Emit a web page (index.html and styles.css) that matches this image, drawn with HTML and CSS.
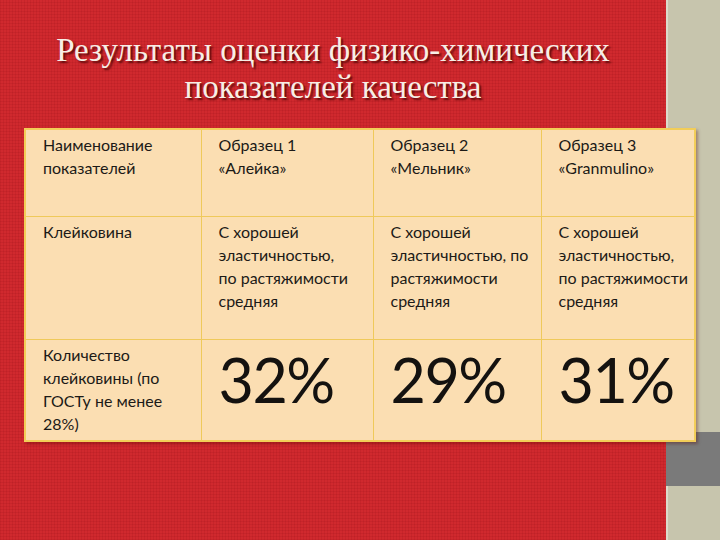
FILE: index.html
```html
<!DOCTYPE html>
<html lang="ru">
<head>
<meta charset="utf-8">
<title>Результаты оценки</title>
<link rel="stylesheet" href="styles.css">
</head>
<body>
<div class="page">
  <main class="slide">
    <h1 class="title">Результаты оценки физико-химических<br>показателей качества</h1>
    <table class="results">
      <colgroup>
        <col class="c1"><col class="c2"><col class="c3"><col class="c4">
      </colgroup>
      <tr class="r1">
        <td>Наименование показателей</td>
        <td>Образец 1<br>«Алейка»</td>
        <td>Образец 2<br>«Мельник»</td>
        <td>Образец 3<br>«Granmulino»</td>
      </tr>
      <tr class="r2">
        <td>Клейковина</td>
        <td>С хорошей эластичностью,<br>по растяжимости средняя</td>
        <td>С хорошей эластичностью, по растяжимости средняя</td>
        <td>С хорошей эластичностью,<br>по растяжимости средняя</td>
      </tr>
      <tr class="r3">
        <td>Количество клейковины (по ГОСТу не менее 28%)</td>
        <td class="big">32%</td>
        <td class="big">29%</td>
        <td class="big">31%</td>
      </tr>
    </table>
  </main>
  <aside class="strip">
    <div class="strip-top"></div>
    <div class="strip-block"></div>
    <div class="strip-bottom"></div>
  </aside>
</div>
</body>
</html>
```
FILE: styles.css
```css
html, body {
  margin: 0;
  padding: 0;
  width: 720px;
  height: 540px;
  overflow: hidden;
}
.page {
  display: flex;
  width: 720px;
  height: 540px;
}
.slide {
  width: 666px;
  flex: none;
  background-color: #d0292e;
  background-image:
    repeating-linear-gradient(90deg, rgba(120,0,10,0.10) 0 1px, transparent 1px 3px),
    repeating-linear-gradient(0deg, rgba(120,0,10,0.10) 0 1px, transparent 1px 3px);
  padding: 32px 0 0 24px;
  box-sizing: border-box;
  position: relative;
  z-index: 1;
}
.title {
  margin: 0 0 0 -24px;
  width: 666px;
  text-align: center;
  font-family: "Liberation Serif", "DejaVu Serif", serif;
  font-weight: normal;
  font-size: 33px;
  line-height: 37px;
  color: #f7eee6;
  text-shadow: 2px 2px 2px rgba(60,0,0,0.75);
  height: 96px;
}
.results {
  border-collapse: collapse;
  table-layout: fixed;
  width: 670px;
  background: #fbdeb2;
  border: 2px solid #f2cd58;
  box-shadow: 2px 2px 3px rgba(80,0,0,0.35);
  font-family: Lato, "Open Sans", sans-serif;
  font-size: 16px;
  line-height: 23px;
  color: #1c1a17;
}
.c1 { width: 176px; }
.c2 { width: 172px; }
.c3 { width: 168px; }
.c4 { width: 154px; }
.results td {
  border: 1px solid #efc95a;
  vertical-align: top;
  padding: 3px 6px 0 17px;
}
.results tr.r3 td:first-child { padding-right: 16px; }
.r1 { height: 87px; }
.r2 { height: 123px; }
.r3 { height: 102px; }
.results td.big {
  font-size: 61px;
  line-height: 60px;
  padding-top: 10px;
  letter-spacing: -1.5px;
  color: #141210;
}
.strip {
  width: 54px;
  flex: none;
  display: flex;
  flex-direction: column;
  background: #c7c5ad;
  border-left: 2px solid #dcdccb;
  box-sizing: border-box;
}
.strip-top { height: 432px; }
.strip-block { height: 54px; background: #7a7a7a; margin-left: -2px; }
.strip-bottom { flex: 1; }
```
